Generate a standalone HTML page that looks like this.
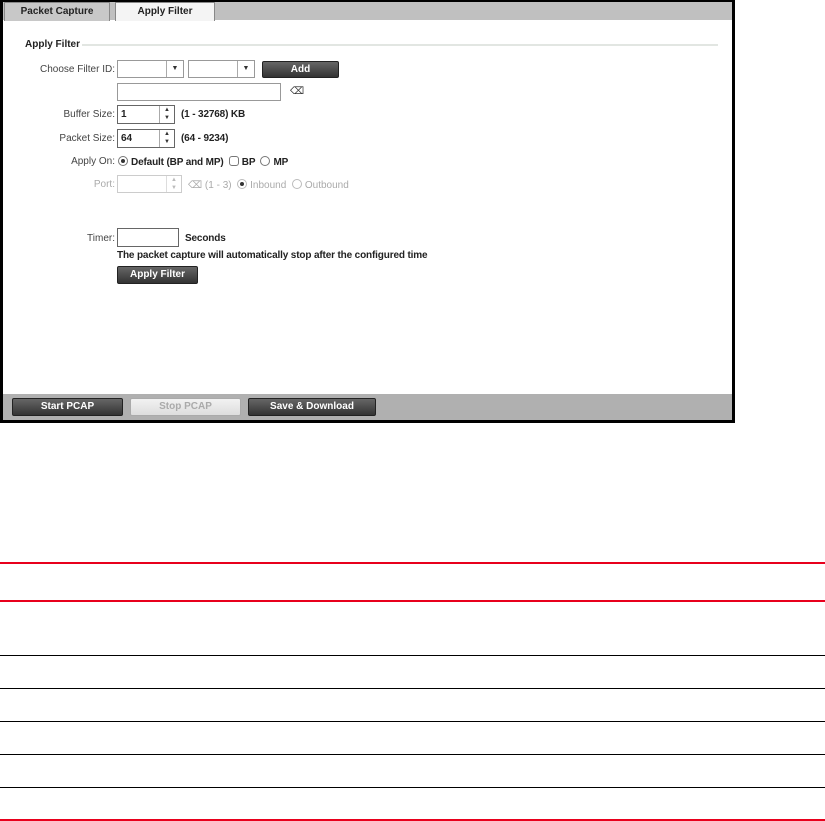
<!DOCTYPE html>
<html><head><meta charset="utf-8"><style>
*{margin:0;padding:0;box-sizing:border-box}
body{width:825px;height:821px;background:#fff;position:relative;font-family:"Liberation Sans",Arial,sans-serif;font-size:10px;color:#222;overflow:hidden}
.a{position:absolute}
.frame{left:0;top:0;width:735px;height:423px;border:3px solid #000;border-top-width:2px;background:#fff}
.tabbar{left:3px;top:2px;width:729px;height:18px;background:#c0c0c0}
.tab{height:19px;border:1px solid #888;border-bottom:none;font-weight:bold;text-align:center;line-height:17px;font-size:10px}
.lbl{text-align:right;width:110px;left:5px;color:#444;font-size:10px}
.inp{border:1px solid #999;background:#fff}
.btn{background:linear-gradient(#666,#333);color:#fff;font-weight:bold;text-align:center;border-radius:2px;border:1px solid #222;font-size:10px}
.spin{border-left:1px solid #aaa;width:15px;height:100%;position:absolute;right:0;top:0;font-size:6px;text-align:center;line-height:8px;color:#333}
.rad{width:10px;height:10px;border:1px solid #777;border-radius:50%;display:inline-block;vertical-align:-1px;margin-right:3px;position:relative}
.dot:after{content:"";position:absolute;left:2px;top:2px;width:4px;height:4px;border-radius:50%;background:#333}
.line{left:0;width:825px}
.b{font-weight:bold;letter-spacing:-0.15px}
</style></head><body>
<div class="a frame"></div>
<div class="a tabbar"></div>
<div class="a tab" style="left:4px;top:2px;width:106px;background:#c8c8c8;">Packet Capture</div>
<div class="a tab" style="left:115px;top:2px;width:100px;background:#f4f4f4;font-weight:bold">Apply Filter</div>

<div class="a" style="left:25px;top:39px;font-weight:bold;font-size:10px">Apply Filter</div>
<div class="a" style="left:82px;top:44px;width:636px;height:2px;background:#e2e6e2"></div>

<div class="a lbl" style="top:64px">Choose Filter ID:</div>
<div class="a inp" style="left:117px;top:60px;width:67px;height:18px"><div class="spin" style="width:17px;line-height:16px;font-size:7px">▼</div></div>
<div class="a inp" style="left:188px;top:60px;width:67px;height:18px"><div class="spin" style="width:17px;line-height:16px;font-size:7px">▼</div></div>
<div class="a btn" style="left:262px;top:61px;width:77px;height:17px;line-height:15px">Add</div>
<div class="a inp" style="left:117px;top:83px;width:164px;height:18px"></div>
<div class="a" style="left:290px;top:86px;font-size:10px;color:#333">⌫</div>

<div class="a lbl" style="top:109px">Buffer Size:</div>
<div class="a inp" style="left:117px;top:105px;width:58px;height:19px;border-color:#666"><span style="position:absolute;left:3px;top:3px;font-weight:bold">1</span><div class="spin">▲<br>▼</div></div>
<div class="a b" style="left:181px;top:109px">(1 - 32768) KB</div>

<div class="a lbl" style="top:133px">Packet Size:</div>
<div class="a inp" style="left:117px;top:129px;width:58px;height:19px;border-color:#666"><span style="position:absolute;left:3px;top:3px;font-weight:bold">64</span><div class="spin">▲<br>▼</div></div>
<div class="a b" style="left:181px;top:133px">(64 - 9234)</div>

<div class="a lbl" style="top:156px">Apply On:</div>
<div class="a b" style="left:118px;top:156px"><span class="rad dot"></span>Default (BP and MP) &nbsp;<span class="rad" style="border-radius:3px"></span>BP &nbsp;<span class="rad"></span>MP</div>

<div class="a lbl" style="top:179px;color:#aaa">Port:</div>
<div class="a inp" style="left:117px;top:175px;width:65px;height:18px;border-color:#ccc"><div class="spin" style="border-color:#ddd;color:#bbb">▲<br>▼</div></div>
<div class="a" style="left:188px;top:179px;color:#aaa">⌫ (1 - 3) &nbsp;<span class="rad dot" style="border-color:#bbb"></span>Inbound &nbsp;<span class="rad" style="border-color:#bbb"></span>Outbound</div>

<div class="a lbl" style="top:233px">Timer:</div>
<div class="a inp" style="left:117px;top:228px;width:62px;height:19px;border-color:#666"></div>
<div class="a b" style="left:185px;top:233px">Seconds</div>
<div class="a b" style="left:117px;top:250px">The packet capture will automatically stop after the configured time</div>
<div class="a btn" style="left:117px;top:266px;width:81px;height:18px;line-height:16px">Apply Filter</div>

<div class="a" style="left:3px;top:394px;width:729px;height:26px;background:#b0b0b0"></div>
<div class="a btn" style="left:12px;top:398px;width:111px;height:18px;line-height:16px">Start PCAP</div>
<div class="a btn" style="left:130px;top:398px;width:111px;height:18px;line-height:16px;background:linear-gradient(#f2f2f2,#ddd);color:#aaa;border-color:#aaa">Stop PCAP</div>
<div class="a btn" style="left:248px;top:398px;width:128px;height:18px;line-height:16px">Save &amp; Download</div>

<div class="a line" style="top:562px;height:2px;background:#e8001c"></div>
<div class="a line" style="top:600px;height:2px;background:#e8001c"></div>
<div class="a line" style="top:655px;height:1px;background:#000"></div>
<div class="a line" style="top:688px;height:1px;background:#000"></div>
<div class="a line" style="top:721px;height:1px;background:#000"></div>
<div class="a line" style="top:754px;height:1px;background:#000"></div>
<div class="a line" style="top:787px;height:1px;background:#000"></div>
<div class="a line" style="top:819px;height:2px;background:#e8001c"></div>
</body></html>
